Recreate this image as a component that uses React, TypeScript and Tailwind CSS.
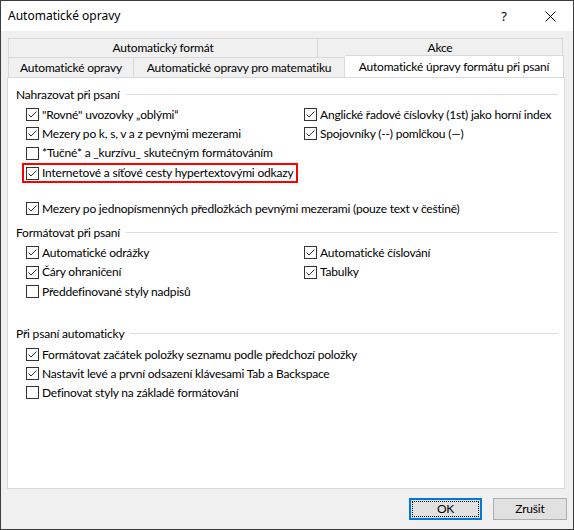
import React from "react";

type Item = { label: string; checked: boolean };

const Checkbox: React.FC<{ checked: boolean }> = ({ checked }) => (
  <span className="w-[13px] h-[13px] shrink-0 border border-[#333333] bg-white flex items-center justify-center">
    {checked && (
      <svg width="11" height="11" viewBox="0 0 11 11" fill="none">
        <polyline points="1.5,5.5 4,8 9.5,2.5" stroke="#333333" strokeWidth="1" />
      </svg>
    )}
  </span>
);

const Row: React.FC<Item> = ({ label, checked }) => (
  <div className="h-[19px] flex items-center gap-[3px] whitespace-nowrap">
    <Checkbox checked={checked} />
    <span>{label}</span>
  </div>
);

const Header: React.FC<{ title: string; className?: string }> = ({ title, className }) => (
  <div className={"h-[19px] flex items-center pl-[8px] pr-[6px] " + (className ?? "")}>
    <span className="whitespace-nowrap">{title}</span>
    <span className="flex-1 h-px bg-[#dcdcdc] ml-[6px]" />
  </div>
);

export default function App() {
  return (
    <div className="w-[574px] h-[530px] border border-[#3c3c3c] bg-[#f0f0f0] flex flex-col font-['Lato',sans-serif] text-[12px] tracking-[-0.2px] text-black leading-none">
      {/* title bar */}
      <div className="h-[30px] bg-white flex items-center shrink-0 font-['Noto_Sans',sans-serif] tracking-normal">
        <span className="pl-[7px] flex-1">Automatické opravy</span>
        <div className="w-[46px] h-full flex items-center justify-center text-[13px]">?</div>
        <div className="w-[46px] h-full flex items-center justify-center">
          <svg width="11" height="11" viewBox="0 0 11 11">
            <path d="M0.5 0.5 L10.5 10.5 M10.5 0.5 L0.5 10.5" stroke="#000" strokeWidth="1" />
          </svg>
        </div>
      </div>

      <div className="flex flex-col pl-[6px] pt-[7px]">
        {/* tabs */}
        <div className="flex h-[19px] ml-[1px]">
          <div className="w-[310px] border border-b-0 border-[#d9d9d9] flex items-center justify-center">
            Automatický formát
          </div>
          <div className="w-[245px] border border-b-0 border-l-0 border-[#d9d9d9] flex items-center justify-center">
            Akce
          </div>
        </div>
        <div className="flex h-[20px] ml-[1px]">
          <div className="w-[126px] border border-b-0 border-[#d9d9d9] flex items-center justify-center">
            Automatické opravy
          </div>
          <div className="w-[211px] border border-b-0 border-l-0 border-[#d9d9d9] flex items-center justify-center">
            Automatické opravy pro matematiku
          </div>
          <div className="w-[219px] h-[22px] -mt-[2px] relative z-10 -mb-[1px] bg-white border border-b-0 border-l-0 border-[#d9d9d9] flex items-center justify-center">
            Automatické úpravy formátu při psaní
          </div>
        </div>

        {/* panel */}
        <div className="w-[558px] h-[412px] bg-white border border-[#d9d9d9] pt-[7px] flex flex-col">
          <Header title="Nahrazovat při psaní" />
          <div className="grid grid-cols-[278px_1fr] pl-[18px] mt-[1px]">
            <div className="flex flex-col">
              <Row label={'"Rovné" uvozovky „oblými“'} checked />
              <Row label="Mezery po k, s, v a z pevnými mezerami" checked />
              <div className="h-[20px] flex items-center gap-[3px] whitespace-nowrap">
                <Checkbox checked={false} />
                <span>*Tučné* a _kurzívu_ skutečným formátováním</span>
              </div>
              <div className="h-[20px] -ml-[4px] pl-[2px] pr-[3px] w-fit border-2 border-[#ff0000] flex items-center gap-[3px] whitespace-nowrap">
                <Checkbox checked />
                <span>Internetové a síťové cesty hypertextovými odkazy</span>
              </div>
            </div>
            <div className="flex flex-col">
              <Row label="Anglické řadové číslovky (1st) jako horní index" checked />
              <Row label="Spojovníky (--) pomlčkou (—)" checked />
            </div>
          </div>
          <div className="pl-[18px] mt-[16px]">
            <Row label="Mezery po jednopísmenných předložkách pevnými mezerami (pouze text v češtině)" checked />
          </div>

          <Header title="Formátovat při psaní" className="mt-[5px]" />
          <div className="grid grid-cols-[278px_1fr] pl-[18px] mt-[1px]">
            <div className="flex flex-col">
              <Row label="Automatické odrážky" checked />
              <div className="h-[20px] flex items-center gap-[3px] whitespace-nowrap">
                <Checkbox checked />
                <span>Čáry ohraničení</span>
              </div>
              <Row label="Předdefinované styly nadpisů" checked={false} />
            </div>
            <div className="flex flex-col">
              <Row label="Automatické číslování" checked />
              <div className="h-[20px] flex items-center gap-[3px] whitespace-nowrap">
                <Checkbox checked />
                <span>Tabulky</span>
              </div>
            </div>
          </div>

          <Header title="Při psaní automaticky" className="mt-[23px]" />
          <div className="flex flex-col pl-[18px] mt-[2px]">
            <Row label="Formátovat začátek položky seznamu podle předchozí položky" checked />
            <Row label="Nastavit levé a první odsazení klávesami Tab a Backspace" checked />
            <Row label="Definovat styly na základě formátování" checked={false} />
          </div>
        </div>

        {/* buttons */}
        <div className="flex justify-end gap-[11px] mt-[9px] pr-[6px]">
          <button className="w-[73px] h-[22px] border-2 border-[#0078d7] bg-[#e1e1e1] p-px flex">
            <span className="flex-1 border border-dotted border-black flex items-center justify-center">OK</span>
          </button>
          <button className="w-[74px] h-[22px] border border-[#adadad] bg-[#e1e1e1] flex items-center justify-center">
            Zrušit
          </button>
        </div>
      </div>
    </div>
  );
}
